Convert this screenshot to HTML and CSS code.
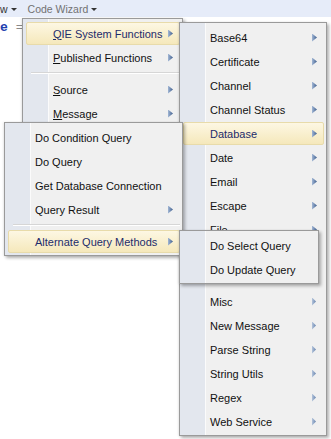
FILE: index.html
```html
<!DOCTYPE html>
<html lang="en">
<head>
<meta charset="UTF-8">
<title>Code Wizard</title>
<link rel="stylesheet" href="styles.css">
</head>
<body>

<div class="toolbar">
    <span class="tb-item dark">w <span class="caret"></span></span>
    <span class="tb-item">Code Wizard <span class="caret"></span></span>
</div>
<div class="code"><span class="kw">e</span> <span class="op">=</span></div>

<!-- Code Wizard menu -->
<div class="menu menu-wizard">
    <div class="item hot"><span><u>Q</u>IE System Functions</span><i class="arrow"></i></div>
    <div class="item"><span><u>P</u>ublished Functions</span><i class="arrow"></i></div>
    <div class="sep"></div>
    <div class="item"><span><u>S</u>ource</span><i class="arrow"></i></div>
    <div class="item"><span><u>M</u>essage</span><i class="arrow"></i></div>
</div>

<!-- QIE System Functions -->
<div class="menu menu-system">
    <div class="item"><span>Base64</span><i class="arrow"></i></div>
    <div class="item"><span>Certificate</span><i class="arrow"></i></div>
    <div class="item"><span>Channel</span><i class="arrow"></i></div>
    <div class="item"><span>Channel Status</span><i class="arrow"></i></div>
    <div class="item hot"><span>Database</span><i class="arrow"></i></div>
    <div class="item"><span>Date</span><i class="arrow"></i></div>
    <div class="item"><span>Email</span><i class="arrow"></i></div>
    <div class="item"><span>Escape</span><i class="arrow"></i></div>
    <div class="item"><span>File</span><i class="arrow"></i></div>
    <!-- two entries covered by the open submenu -->
    <div class="item"><i class="arrow"></i></div>
    <div class="item"><i class="arrow"></i></div>
    <div class="item"><span>Misc</span><i class="arrow faint"></i></div>
    <div class="item"><span>New Message</span><i class="arrow faint"></i></div>
    <div class="item"><span>Parse String</span><i class="arrow faint"></i></div>
    <div class="item"><span>String Utils</span><i class="arrow faint"></i></div>
    <div class="item"><span>Regex</span><i class="arrow faint"></i></div>
    <div class="item"><span>Web Service</span><i class="arrow faint"></i></div>
</div>

<!-- Database -->
<div class="menu menu-database">
    <div class="item"><span>Do Condition Query</span></div>
    <div class="item"><span>Do Query</span></div>
    <div class="item"><span>Get Database Connection</span></div>
    <div class="item"><span>Query Result</span><i class="arrow"></i></div>
    <div class="sep"></div>
    <div class="item hot"><span>Alternate Query Methods</span><i class="arrow"></i></div>
</div>

<!-- Alternate Query Methods -->
<div class="menu menu-alternate">
    <div class="item"><span>Do Select Query</span></div>
    <div class="item"><span>Do Update Query</span></div>
</div>

</body>
</html>
```

FILE: styles.css
```css
body {
    margin: 0;
    width: 331px;
    height: 439px;
    overflow: hidden;
    position: relative;
    background-color: #ffffff;
    font-family: Tahoma, "Liberation Sans", sans-serif;
    font-size: 11px;
    color: #111;
}

.toolbar {
    height: 17px;
    background-color: #e6ecf9;
    display: flex;
    align-items: center;
}

.tb-item {
    display: flex;
    align-items: center;
    gap: 3px;
    margin-right: 11px;
    font-size: 10.5px;
    color: #727272;
}

.tb-item.dark {
    color: #333;
}

.caret {
    width: 0;
    height: 0;
    margin-top: 2px;
    border-left: 3px solid transparent;
    border-right: 3px solid transparent;
    border-top: 3px solid #333;
}

.code {
    margin-top: 3px;
    line-height: 16px;
    font: bold 13px "Liberation Mono", monospace;
    white-space: pre;
}

.code .kw {
    color: #1f3fae;
}

.code .op {
    color: #8a8a8a;
    font-weight: normal;
}

/* popup menus */
.menu {
    position: absolute;
    box-sizing: border-box;
    padding: 2px 2px 2px 3px;
    border: 1px solid #9a9a9a;
    background: linear-gradient(to right, #e3e7ee 0 25px, #fbfbfb 25px 26px, #f0f0f0 26px);
    box-shadow: 2px 2px 3px rgba(0, 0, 0, 0.3), -1px 0 2px rgba(0, 0, 0, 0.08);
}

.menu-wizard {
    left: 22px;
    top: 18px;
    width: 161px;
}

.menu-system {
    left: 179px;
    top: 22px;
    width: 148px;
}

.menu-database {
    left: 4px;
    top: 122px;
    width: 179px;
}

.menu-alternate {
    left: 179px;
    top: 230px;
    width: 140px;
}

.item {
    box-sizing: border-box;
    height: 23px;
    margin-top: 1px;
    display: flex;
    align-items: center;
    padding: 0 6px 0 26px;
    border: 1px solid transparent;
    border-radius: 2px;
    white-space: nowrap;
}

.item.hot {
    background: linear-gradient(#fdf7e3, #f5e8bb);
    border-color: #e8dbaa;
    color: #1d2b6a;
}

.item u {
    text-decoration-thickness: 1px;
    text-underline-offset: 1px;
}

.arrow {
    margin-left: auto;
    width: 5px;
    height: 8px;
    background: linear-gradient(to right, #a3b8d6, #3d5d8c);
    clip-path: polygon(0 0, 100% 50%, 0 100%);
}

.arrow.faint {
    width: 4px;
    margin-right: 1px;
    background: linear-gradient(to right, #b5c5dc, #6683ad);
}

.sep {
    height: 8px;
    margin-left: 5px;
    background: linear-gradient(to bottom, transparent 3px, #d6d6d6 3px 4px, #ffffff 4px 5px, transparent 5px);
}
```
